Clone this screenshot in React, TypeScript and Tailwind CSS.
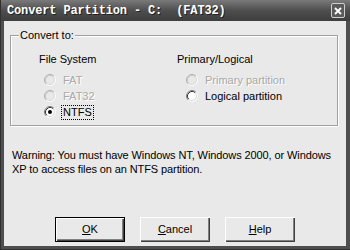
import React from "react";

const font = { fontFamily: '"Liberation Sans", Arial, sans-serif' };

function Radio({ checked, disabled }: { checked?: boolean; disabled?: boolean }) {
  return (
    <svg width="12" height="12" viewBox="0 0 12 12" className="shrink-0">
      <circle cx="6" cy="6" r="5" fill={disabled ? "#e9e9e9" : "#ffffff"} />
      <path d="M2.11 9.89 A5.5 5.5 0 0 1 9.89 2.11" fill="none" stroke={disabled ? "#b0b0b0" : "#808080"} strokeWidth="1" />
      <path d="M9.89 2.11 A5.5 5.5 0 0 1 2.11 9.89" fill="none" stroke="#ffffff" strokeWidth="1" />
      <path d="M2.82 9.18 A4.5 4.5 0 0 1 9.18 2.82" fill="none" stroke={disabled ? "#c8c8c8" : "#303030"} strokeWidth="1" />
      <path d="M9.18 2.82 A4.5 4.5 0 0 1 2.82 9.18" fill="none" stroke="#d8d8d8" strokeWidth="1" />
      {checked && <circle cx="6" cy="6" r="2" fill="#000" />}
    </svg>
  );
}

function RadioRow({ label, checked, disabled, focus }: { label: string; checked?: boolean; disabled?: boolean; focus?: boolean }) {
  return (
    <div className="flex items-center h-[16px]">
      <Radio checked={checked} disabled={disabled} />
      <span
        className={
          "ml-[6px] leading-[13px] px-[1px] " +
          (disabled ? "text-[#a8a8a8] [text-shadow:1px_1px_0_#fff]" : "text-black") +
          (focus ? " outline-1 outline-dotted outline-black" : "")
        }
      >
        {label}
      </span>
    </div>
  );
}

function Button({ children, def }: { children: React.ReactNode; def?: boolean }) {
  return (
    <div
      className={
        "w-[70px] h-[25px] flex items-center justify-center text-[11px] text-black bg-[#e9e9e9] " +
        (def
          ? "border border-black shadow-[inset_1px_1px_0_#fff,inset_-1px_-1px_0_#404040,inset_-2px_-2px_0_#808080]"
          : "shadow-[inset_1px_1px_0_#fff,inset_-1px_-1px_0_#404040,inset_-2px_-2px_0_#808080]")
      }
    >
      {children}
    </div>
  );
}

export default function App() {
  return (
    <div className="w-[350px] h-[250px] bg-[#4e4e4e] flex flex-col border-l border-b border-[#303030]" style={font}>
      <div className="h-[21px] flex items-center bg-gradient-to-b from-[#7a7a7a] via-[#4e4e4e] to-[#3e3e3e] pl-[6px] pr-[5px]">
        <span
          className="text-white font-bold text-[12px] leading-none [text-shadow:1px_1px_0_#222] whitespace-pre tracking-[-0.15px]"
          style={{ fontFamily: '"Liberation Mono", "Courier New", monospace' }}
        >
          Convert Partition - C:  (FAT32)
        </span>
        <div className="ml-auto w-[14px] h-[15px] border border-[#d0d0d0] bg-[#5a5a5a] flex items-center justify-center rounded-[2px]">
          <svg width="8" height="8" viewBox="0 0 8 8">
            <path d="M1 1 L7 7 M7 1 L1 7" stroke="#fff" strokeWidth="1.8" />
          </svg>
        </div>
      </div>
      <div className="flex-1 bg-[#e9e9e9] mr-[4px] ml-[3px] mb-[3px] text-[11px] flex flex-col">
        <div className="relative mt-[14px] ml-[6px] w-[328px] h-[91px] border border-[#a0a0a0] shadow-[inset_1px_1px_0_#fff,1px_1px_0_#fff]">
          <span className="absolute left-[8px] top-[-7px] bg-[#e9e9e9] px-[1px] leading-[13px] text-black">Convert to:</span>
          <div className="flex mt-[17px]">
            <div className="ml-[28px] w-[138px] flex flex-col">
              <div className="leading-[13px] h-[13px]">File System</div>
              <div className="mt-[6px] ml-[5px] flex flex-col">
                <RadioRow label="FAT" disabled />
                <RadioRow label="FAT32" disabled />
                <RadioRow label="NTFS" checked focus />
              </div>
            </div>
            <div className="flex flex-col">
              <div className="leading-[13px] h-[13px]">Primary/Logical</div>
              <div className="mt-[6px] ml-[9px] flex flex-col">
                <RadioRow label="Primary partition" disabled />
                <RadioRow label="Logical partition" />
              </div>
            </div>
          </div>
        </div>
        <div className="mt-[22px] ml-[8px] w-[330px] leading-[14px] tracking-[-0.1px] text-black">
          Warning: You must have Windows NT, Windows 2000, or Windows XP to access files on an NTFS partition.
        </div>
        <div className="mt-auto mb-[4px] ml-[51px] flex gap-[15px]">
          <Button def>
            <span className="underline">O</span>K
          </Button>
          <Button>
            <span className="underline">C</span>ancel
          </Button>
          <Button>
            <span className="underline">H</span>elp
          </Button>
        </div>
      </div>
    </div>
  );
}
